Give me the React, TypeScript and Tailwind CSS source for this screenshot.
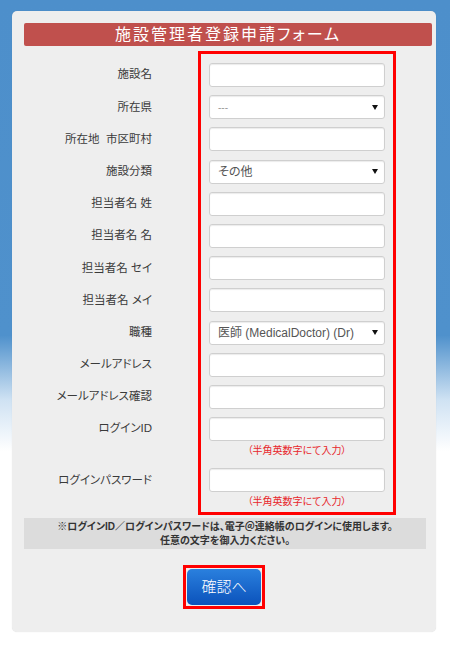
const font = {
  fontFamily: '"Liberation Sans", "Noto Sans CJK JP", sans-serif',
  fontFeatureSettings: '"palt"',
}

type Row = { label: string; kind?: 'text' | 'select'; value?: string; note?: boolean }

const rows: Row[] = [
  { label: '施設名' },
  { label: '所在県', kind: 'select', value: '---' },
  { label: '所在地  市区町村' },
  { label: '施設分類', kind: 'select', value: 'その他' },
  { label: '担当者名 姓' },
  { label: '担当者名 名' },
  { label: '担当者名 セイ' },
  { label: '担当者名 メイ' },
  { label: '職種', kind: 'select', value: '医師 (MedicalDoctor) (Dr)' },
  { label: 'メールアドレス' },
  { label: 'メールアドレス確認' },
  { label: 'ログインID', note: true },
  { label: 'ログインパスワード', note: true },
]

function Field({ row }: { row: Row }) {
  if (row.kind === 'select') {
    const muted = row.value === '---'
    return (
      <div className="flex h-[24px] w-[176px] items-center justify-between rounded-[3px] border border-[#cfcfcf] bg-white pl-[8px] pr-[6px] shadow-[inset_0_1px_1px_rgba(0,0,0,0.08)]">
        <span className={muted ? 'text-[10px] text-[#999]' : 'text-[12px] text-[#555]'}>{row.value}</span>
        <svg width="6" height="5" viewBox="0 0 6 5">
          <path d="M0 0 L6 0 L3 5 Z" fill="#111" />
        </svg>
      </div>
    )
  }
  return (
    <div className="h-[24px] w-[176px] rounded-[3px] border border-[#cfcfcf] bg-white shadow-[inset_0_1px_1px_rgba(0,0,0,0.08)]" />
  )
}

export default function App() {
  return (
    <div
      className="h-[645px] w-[450px] overflow-hidden bg-[linear-gradient(to_bottom,#4d8fcb_0%,#4f91cc_52%,#cfe2f3_62%,#ffffff_70%,#ffffff_100%)] pl-[12px] pt-[11px]"
      style={font}
    >
      <div className="flex h-[621px] w-[424px] flex-col rounded-[5px] bg-[#eeeeee] pt-[12px] shadow-[0_0_1px_rgba(0,0,0,0.15)]">
        {/* title bar */}
        <div className="ml-[12px] flex h-[23px] w-[408px] items-center justify-center rounded-[2px] bg-[#c0504d] text-[16px] tracking-[2px] text-white">
          施設管理者登録申請フォーム
        </div>

        {/* form */}
        <div className="mt-[5px] flex">
          <div className="flex w-[140px] flex-col items-end gap-[8.2px] pt-[12px] text-[11.5px] text-[#3a3a3a]">
            {rows.map((r) => (
              <div key={r.label} className={r.note ? 'flex flex-col items-end' : ''}>
                <div className="flex h-[24px] items-center whitespace-pre">{r.label}</div>
                {r.note && r.label === 'ログインID' && <div className="h-[19px]" />}
              </div>
            ))}
          </div>
          <div className="ml-[46px] flex w-[198px] flex-col gap-[8.2px] border-[3px] border-[#f00] px-[8px] pb-[3px] pt-[9px]">
            {rows.map((r) => (
              <div key={r.label} className="flex flex-col">
                <Field row={r} />
                {r.note && (
                  <div
                    className={`mt-[3px] text-center text-[10px] leading-[14px] text-[#e8262b] ${
                      r.label === 'ログインID' ? 'mb-[2px]' : ''
                    }`}
                  >
                    （半角英数字にて入力）
                  </div>
                )}
              </div>
            ))}
          </div>
        </div>

        {/* note band */}
        <div className="ml-[12px] mt-[3px] flex h-[31px] w-[402px] flex-col items-center justify-center bg-[#dcdcdc] text-[10px] font-bold leading-[14px] text-[#333]">
          <div>※ログインID／ログインパスワードは、電子＠連絡帳のログインに使用します。</div>
          <div>任意の文字を御入力ください。</div>
        </div>

        {/* submit */}
        <div className="mt-[16px] flex justify-center">
          <div className="border-[3px] border-[#f00] p-[1px]">
            <button className="flex h-[36px] w-[74px] items-center justify-center rounded-[5px] bg-[linear-gradient(to_bottom,#2a80de,#0b52bb)] text-[15px] font-light text-white">
              確認へ
            </button>
          </div>
        </div>
      </div>
    </div>
  )
}
